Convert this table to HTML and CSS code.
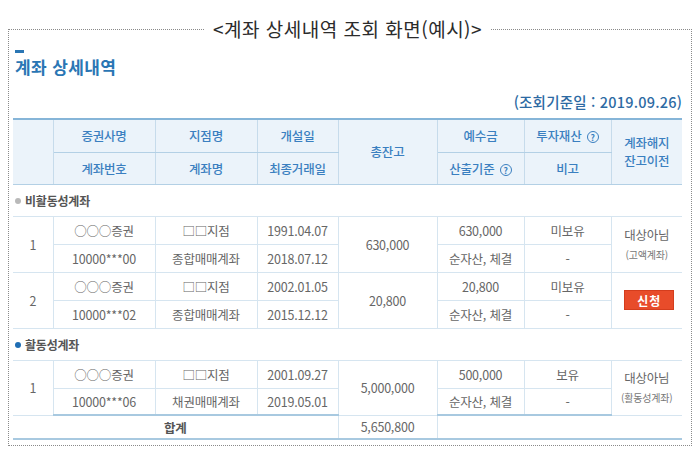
FILE: index.html
```html
<!DOCTYPE html>
<html lang="ko">
<head>
<meta charset="utf-8">
<title>계좌 상세내역 조회 화면(예시)</title>
<link rel="stylesheet" href="styles.css">
</head>
<body>
<fieldset class="frame">
  <legend class="frame-title">&lt;계좌 상세내역 조회 화면(예시)&gt;</legend>
  <h2 class="heading">계좌 상세내역</h2>
  <p class="asof">(조회기준일 : 2019.09.26)</p>
  <table class="acct">
    <colgroup>
      <col class="c-no"><col class="c-firm"><col class="c-branch"><col class="c-date">
      <col class="c-total"><col class="c-dep"><col class="c-asset"><col class="c-close">
    </colgroup>
    <thead>
      <tr class="h1">
        <th rowspan="2" class="blank"></th>
        <th>증권사명</th>
        <th>지점명</th>
        <th>개설일</th>
        <th rowspan="2">총잔고</th>
        <th>예수금</th>
        <th>투자재산 <span class="help">?</span></th>
        <th rowspan="2" class="two">계좌해지<br>잔고이전</th>
      </tr>
      <tr class="h2">
        <th>계좌번호</th>
        <th>계좌명</th>
        <th>최종거래일</th>
        <th>산출기준 <span class="help">?</span></th>
        <th>비고</th>
      </tr>
    </thead>
    <tbody>
      <tr class="section">
        <td colspan="8"><span class="dot dot-grey"></span>비활동성계좌</td>
      </tr>
      <tr class="r-top">
        <td rowspan="2" class="no">1</td>
        <td>○○○증권</td>
        <td>□□지점</td>
        <td>1991.04.07</td>
        <td rowspan="2">630,000</td>
        <td>630,000</td>
        <td>미보유</td>
        <td rowspan="2" class="close">대상아님<span class="note">(고액계좌)</span></td>
      </tr>
      <tr class="r-bot">
        <td>10000***00</td>
        <td>종합매매계좌</td>
        <td>2018.07.12</td>
        <td>순자산, 체결</td>
        <td>-</td>
      </tr>
      <tr class="r-top">
        <td rowspan="2" class="no">2</td>
        <td>○○○증권</td>
        <td>□□지점</td>
        <td>2002.01.05</td>
        <td rowspan="2">20,800</td>
        <td>20,800</td>
        <td>미보유</td>
        <td rowspan="2" class="close"><button class="apply" type="button">신청</button></td>
      </tr>
      <tr class="r-bot">
        <td>10000***02</td>
        <td>종합매매계좌</td>
        <td>2015.12.12</td>
        <td>순자산, 체결</td>
        <td>-</td>
      </tr>
      <tr class="section">
        <td colspan="8"><span class="dot dot-blue"></span>활동성계좌</td>
      </tr>
      <tr class="r-top">
        <td rowspan="2" class="no">1</td>
        <td>○○○증권</td>
        <td>□□지점</td>
        <td>2001.09.27</td>
        <td rowspan="2">5,000,000</td>
        <td>500,000</td>
        <td>보유</td>
        <td rowspan="2" class="close">대상아님<span class="note">(활동성계좌)</span></td>
      </tr>
      <tr class="r-bot r-last">
        <td>10000***06</td>
        <td>채권매매계좌</td>
        <td>2019.05.01</td>
        <td>순자산, 체결</td>
        <td>-</td>
      </tr>
    </tbody>
    <tfoot>
      <tr class="sum">
        <td colspan="4" class="sum-label">합계</td>
        <td>5,650,800</td>
        <td colspan="3" class="sum-rest"></td>
      </tr>
    </tfoot>
  </table>
</fieldset>
</body>
</html>
```

FILE: styles.css
```css
html, body {
  margin: 0;
  padding: 0;
  background: #ffffff;
}

body {
  font-family: "Noto Sans CJK KR", "Noto Sans", sans-serif;
  color: #666;
  width: 700px;
  height: 451px;
  overflow: hidden;
}

.frame {
  margin: 16px 8px 0 8px;
  padding: 0 9px 5px 4px;
  border: 1px dotted #8a8a8a;
  min-inline-size: 0;
}

.frame-title {
  margin: 0 auto;
  padding: 0 8px;
  font-size: 19px;
  line-height: 26px;
  color: #2b2b2b;
  letter-spacing: 0.5px;
}

.heading {
  margin: 8px 0 0 2px;
  font-size: 17px;
  line-height: 20px;
  font-weight: 700;
  color: #2a76b4;
  letter-spacing: 0.4px;
}

.heading::before {
  content: "";
  display: block;
  width: 9px;
  height: 3px;
  background: #2a76b4;
  margin-bottom: 4px;
}

.asof {
  margin: 15px 0 6px 0;
  text-align: right;
  font-size: 14.5px;
  line-height: 20px;
  font-weight: 500;
  color: #2d6aa3;
  letter-spacing: 0.2px;
}

.acct {
  width: 100%;
  table-layout: fixed;
  border-collapse: collapse;
  font-size: 12.5px;
  letter-spacing: -0.2px;
}

.c-no { width: 40px; }
.c-firm { width: 102px; }
.c-branch { width: 102px; }
.c-date { width: 81px; }
.c-total { width: 99px; }
.c-dep { width: 87px; }
.c-asset { width: 87px; }
.c-close { width: 71px; }

.acct th,
.acct td {
  padding: 0;
  text-align: center;
  vertical-align: middle;
}

.acct thead th {
  background: #ebf3fa;
  color: #3a7fc0;
  font-weight: 500;
  border: 1px solid #c6dbeb;
  border-top: 2px solid #86b5d8;
  border-bottom: 1px solid #b3d0e5;
}

.acct thead th:first-child { border-left: none; }
.acct thead tr.h1 th:last-child { border-right: none; }

.acct thead tr.h1 { height: 33px; }
.acct thead tr.h2 { height: 32px; }
.acct thead tr.h2 th { border-top: 1px solid #c6dbeb; }

.acct th.two { line-height: 18px; }

.help {
  display: inline-block;
  width: 10px;
  height: 10px;
  border: 1px solid #3a7fc0;
  border-radius: 50%;
  font-size: 8.5px;
  line-height: 10px;
  font-weight: 700;
  text-align: center;
  vertical-align: 0;
  margin-left: 2px;
  letter-spacing: 0;
}

.acct tbody td,
.acct tfoot td {
  border: 1px solid #d6e5f0;
}

.acct tbody td:first-child,
.acct tfoot td:first-child { border-left: none; }

.acct tbody tr td.close { border-right: none; }
.acct tbody tr.r-top td:last-child { border-right: none; }
.acct tbody tr.r-bot td:last-child { border-right: 1px solid #d6e5f0; }

.section { height: 32px; }
.section td {
  border-left: none !important;
  border-right: none !important;
  text-align: left !important;
  font-weight: 700;
  color: #555;
  font-size: 12px;
  padding-left: 2px !important;
}

.dot {
  display: inline-block;
  width: 6px;
  height: 6px;
  border-radius: 50%;
  margin-right: 4px;
  vertical-align: 2px;
}
.dot-grey { background: #b9b9b9; }
.dot-blue { background: #1f6eb4; }

.r-top { height: 28px; }
.r-bot { height: 28px; }
.r-last { height: 27px; }

.close { line-height: 17px; }
.note {
  display: block;
  font-size: 10px;
  line-height: 16px;
  color: #777;
  margin-top: 4px;
}

.apply {
  width: 50px;
  height: 20px;
  border: 1px solid #d43d1d;
  background: #e84c2a;
  color: #fff;
  font-family: "Noto Sans CJK KR", sans-serif;
  font-size: 12px;
  font-weight: 700;
  letter-spacing: 1px;
  padding: 0;
  margin-left: 5px;
}

.acct tbody tr.r-last td { border-bottom: 2px solid #a8c9e0; }

.sum { height: 24px; }
.sum td {
  border-top: 2px solid #a8c9e0;
  border-bottom: 2px solid #a8c9e0 !important;
  border-left: none;
  border-right: 1px solid #d6e5f0;
}
.sum td.sum-rest { border-right: none; }
.sum-label {
  font-weight: 700;
  color: #555;
}
```
